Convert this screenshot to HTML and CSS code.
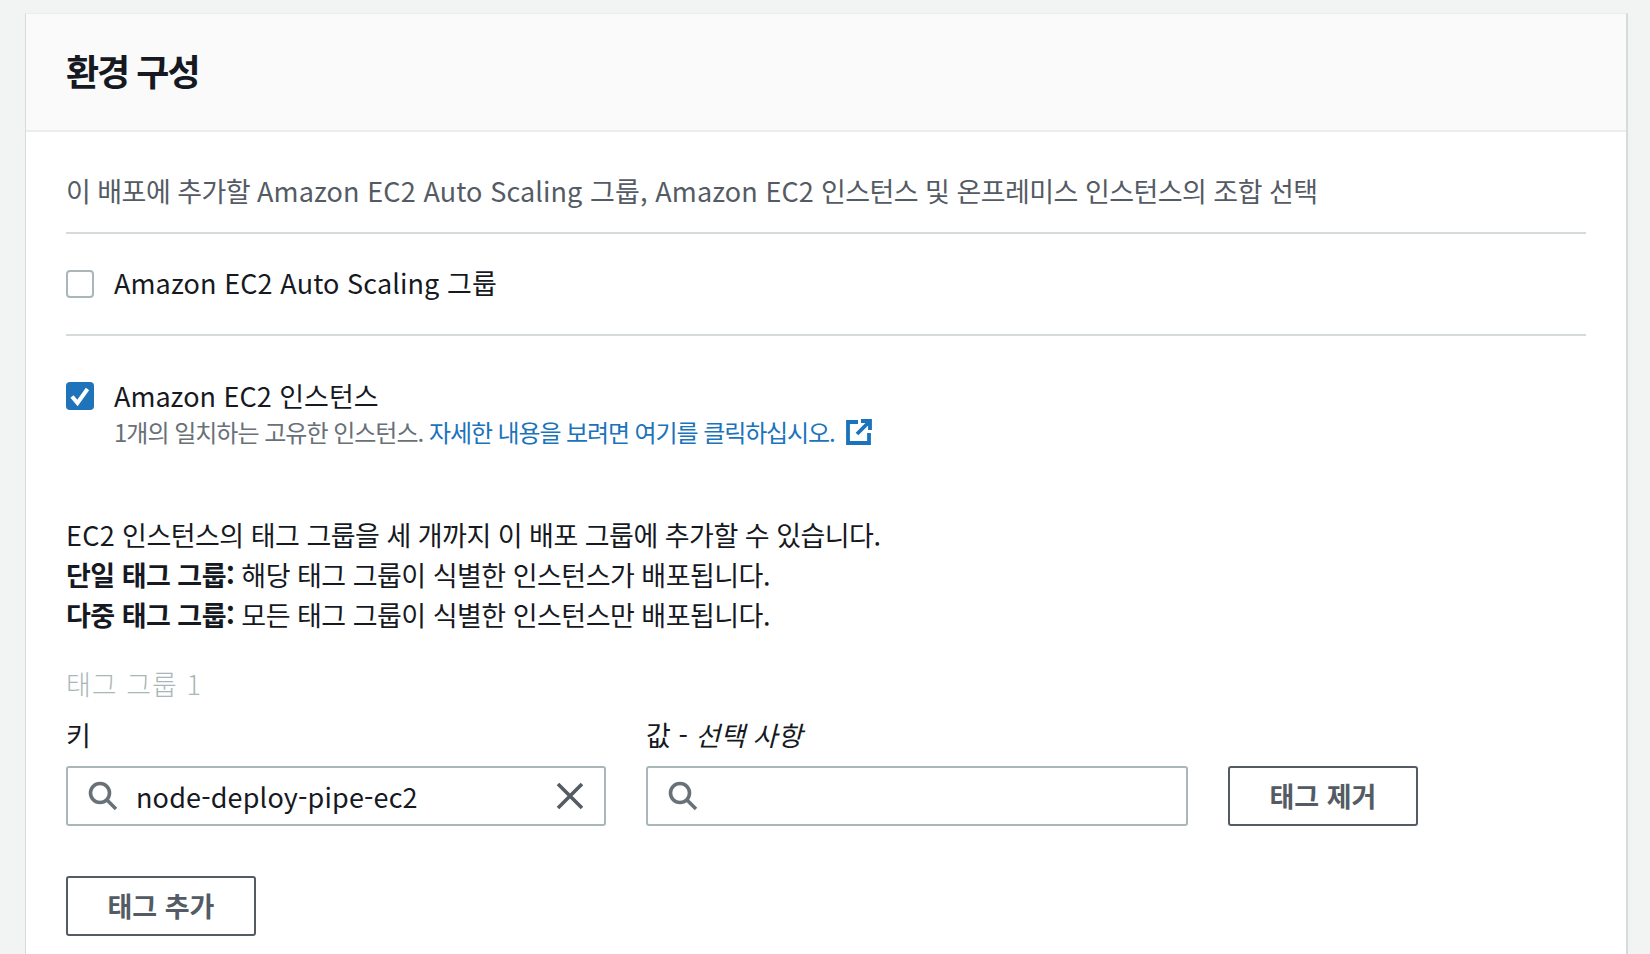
FILE: index.html
```html
<!DOCTYPE html>
<html lang="ko">
<head>
<meta charset="utf-8">
<title>환경 구성</title>
<link rel="stylesheet" href="styles.css">
</head>
<body>
<main class="card">
  <header class="card-header"><h2 class="title">환경 구성</h2></header>
  <div class="card-body">
    <p class="desc"><span class="ko">이 배포에 추가할 </span>Amazon EC2 Auto Scaling 그룹, Amazon EC2<span class="ko"> 인스턴스 및 온프레미스 인스턴스의 조합 선택</span></p>
    <div class="option option-first">
      <span class="check"></span>
      <div class="option-text"><div class="option-label option-label-wide">Amazon EC2 Auto Scaling 그룹</div></div>
    </div>
    <div class="option option-second">
      <span class="check check-on">
        <svg viewBox="0 0 28 28" width="28" height="28"><path d="M6 14.5l5.5 6.5 10-14" fill="none" stroke="#fff" stroke-width="4"/></svg>
      </span>
      <div class="option-text">
        <div class="option-label">Amazon EC2 인스턴스</div>
        <div class="option-sub">1개의 일치하는 고유한 인스턴스. <a class="link" href="#">자세한 내용을 보려면 여기를 클릭하십시오.</a>
          <svg class="ext" viewBox="0 0 26 26" width="26" height="26"><path d="M12 3H2v21h21V14M15 2h9v9M24 2L11 15" fill="none" stroke="#1a73bb" stroke-width="3.8"/></svg>
        </div>
      </div>
    </div>
    <div class="info">
      <div><span class="latin">EC2</span> 인스턴스의 태그 그룹을 세 개까지 이 배포 그룹에 추가할 수 있습니다.</div>
      <div><b>단일 태그 그룹:</b> 해당 태그 그룹이 식별한 인스턴스가 배포됩니다.</div>
      <div><b>다중 태그 그룹:</b> 모든 태그 그룹이 식별한 인스턴스만 배포됩니다.</div>
    </div>
    <div class="group-title">태그 그룹 1</div>
    <div class="tag-row">
      <div class="field field-key">
        <label class="field-label">키</label>
        <div class="input">
          <svg class="search" viewBox="0 0 32 32" width="32" height="32"><circle cx="13" cy="13" r="9.5" fill="none" stroke="#687078" stroke-width="3.6"/><path d="M20 20l9 9" stroke="#687078" stroke-width="3.6"/></svg>
          <span class="input-value">node-deploy-pipe-ec2</span>
          <svg class="clear" viewBox="0 0 30 30" width="30" height="30"><path d="M3 3l24 24M27 3L3 27" stroke="#545b64" stroke-width="3.6"/></svg>
        </div>
      </div>
      <div class="field field-value">
        <label class="field-label">값 - <i>선택 사항</i></label>
        <div class="input">
          <svg class="search" viewBox="0 0 32 32" width="32" height="32"><circle cx="13" cy="13" r="9.5" fill="none" stroke="#687078" stroke-width="3.6"/><path d="M20 20l9 9" stroke="#687078" stroke-width="3.6"/></svg>
        </div>
      </div>
      <button class="btn btn-remove">태그 제거</button>
    </div>
    <button class="btn btn-add">태그 추가</button>
  </div>
</main>
</body>
</html>
```
FILE: styles.css
```css
* { box-sizing: border-box; }
html, body { margin: 0; height: 954px; overflow: hidden; }
body {
  background: #f2f3f3;
  color: #16191f;
  font-family: "Noto Sans CJK KR", "Noto Sans", sans-serif;
  font-size: 27px;
  padding: 13px 22px 0 25px;
}
.card {
  background: #fff;
  height: 960px;
  border-top: 1px solid #eaeded;
  border-left: 1px solid #d5dbdb;
  border-right: 2px solid #d5dbdb;
}
.card-header {
  background: #fafafa;
  height: 118px;
  border-bottom: 2px solid #eaeded;
  padding: 0 40px;
  display: flex;
  align-items: center;
}
.title { margin: 0; font-size: 36px; font-weight: 700; line-height: 50px; letter-spacing: -2px; position: relative; top: -2px; }
.card-body { padding: 0 40px; }
.desc {
  margin: 0;
  height: 102px;
  padding-top: 39px;
  line-height: 40px;
  letter-spacing: 0.1px;
  color: #545b64;
  border-bottom: 2px solid #d5dbdb;
}
.ko { letter-spacing: -0.55px; }
.option { display: flex; gap: 20px; }
.option-first { height: 102px; align-items: center; border-bottom: 2px solid #d5dbdb; }
.option-second { padding-top: 46px; height: 179px; }
.check {
  width: 28px;
  height: 28px;
  flex: none;
  border: 2px solid #aab7b8;
  border-radius: 4px;
  background: #fff;
}
.check-on { background: #1f73bb; border: 0; display: block; }
.check-on svg { display: block; }
.option-label { line-height: 38px; margin-top: -5px; }
.option-label-wide { letter-spacing: 0.1px; position: relative; top: 1px; margin-top: -4px; }
.option-sub { color: #687078; font-size: 24px; line-height: 34px; letter-spacing: -1px; display: flex; align-items: center; white-space: pre-wrap; }
.link { color: #1a73bb; text-decoration: none; letter-spacing: -1.1px; }
.ext { margin-left: 11px; }
.info { line-height: 40px; letter-spacing: -0.52px; }
.latin { letter-spacing: 0.3px; }
.group-title { color: #aab7b8; line-height: 40px; margin-top: 29px; font-weight: 300; letter-spacing: 1px; }
.tag-row { display: flex; gap: 40px; align-items: flex-end; margin-top: 10px; }
.field-key { width: 540px; }
.field-value { width: 542px; }
.field-label { display: block; line-height: 40px; padding-top: 1px; margin-bottom: 11px; height: 41px; }
.input {
  height: 60px;
  border: 2px solid #aab7b8;
  border-radius: 3px;
  display: flex;
  align-items: center;
  padding: 0 19px 0 19px;
}
.search { flex: none; }
.input-value { margin-left: 17px; flex: 1; letter-spacing: 0.15px; padding-top: 1px; }
.clear { flex: none; }
.btn {
  background: #fff;
  border: 2px solid #545b64;
  border-radius: 3px;
  color: #545b64;
  font: 700 27px "Noto Sans CJK KR", "Noto Sans", sans-serif;
  height: 60px;
  padding: 0 0 2px;
}
.btn-remove { width: 190px; }
.btn-add { width: 190px; margin-top: 50px; display: block; }
```
